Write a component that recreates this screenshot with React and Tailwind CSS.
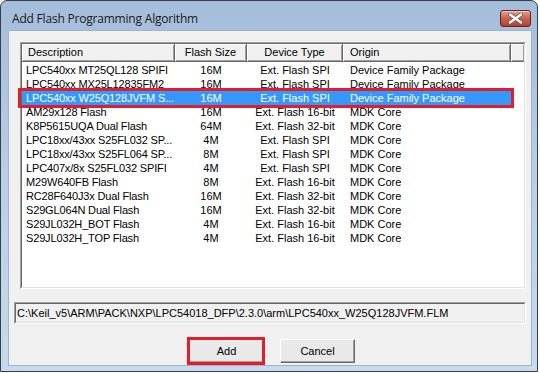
import React from 'react';

const rows = [
    ['LPC540xx MT25QL128 SPIFI', '16M', 'Ext. Flash SPI', 'Device Family Package'],
    ['LPC540xx MX25L12835FM2', '16M', 'Ext. Flash SPI', 'Device Family Package'],
    ['LPC540xx W25Q128JVFM S...', '16M', 'Ext. Flash SPI', 'Device Family Package'],
    ['AM29x128 Flash', '16M', 'Ext. Flash 16-bit', 'MDK Core'],
    ['K8P5615UQA Dual Flash', '64M', 'Ext. Flash 32-bit', 'MDK Core'],
    ['LPC18xx/43xx S25FL032 SP...', '4M', 'Ext. Flash SPI', 'MDK Core'],
    ['LPC18xx/43xx S25FL064 SP...', '8M', 'Ext. Flash SPI', 'MDK Core'],
    ['LPC407x/8x S25FL032 SPIFI', '4M', 'Ext. Flash SPI', 'MDK Core'],
    ['M29W640FB Flash', '8M', 'Ext. Flash 16-bit', 'MDK Core'],
    ['RC28F640J3x Dual Flash', '16M', 'Ext. Flash 32-bit', 'MDK Core'],
    ['S29GL064N Dual Flash', '16M', 'Ext. Flash 32-bit', 'MDK Core'],
    ['S29JL032H_BOT Flash', '4M', 'Ext. Flash 16-bit', 'MDK Core'],
    ['S29JL032H_TOP Flash', '4M', 'Ext. Flash 16-bit', 'MDK Core'],
];

const SELECTED = 2;

// classic 3D header cell
const headCell = "h-full flex items-center bg-[#f0f0f0] border-r border-b border-[#696969] shadow-[inset_1px_1px_0_#ffffff,inset_-1px_-1px_0_#a0a0a0]";

function CloseButton() {
    return (
        <div className="w-[31px] h-[17px] rounded-[3px] border border-[#6b2218] bg-gradient-to-b from-[#e4a394] via-[#c9604c] to-[#b8402c] flex items-center justify-center shadow-[inset_0_1px_0_rgba(255,255,255,0.45)]">
            <svg width="15" height="11" viewBox="0 0 15 11">
                <path d="M2 1.5 L13 9.5 M13 1.5 L2 9.5" stroke="#5a5a5a" strokeWidth="4" strokeLinecap="round" />
                <path d="M2 1.5 L13 9.5 M13 1.5 L2 9.5" stroke="#ffffff" strokeWidth="2.4" strokeLinecap="round" />
            </svg>
        </div>
    );
}

function WinButton({ children }) {
    return (
        <div className="w-[75px] h-[24px] bg-[#e9e9e9] border border-t-white border-l-white border-b-[#696969] border-r-[#696969] shadow-[inset_-1px_-1px_0_#a0a0a0] flex items-center justify-center text-[11px] text-black">
            {children}
        </div>
    );
}

export default function App() {
    return (
        <div className="w-[540px] h-[373px] bg-white font-['Liberation_Sans',Arial,sans-serif]">
            <div className="w-[538px] h-[372px] rounded-t-[7px] border border-[#3a3f46] bg-gradient-to-b from-[#a4bddb] via-[#bacfe7] to-[#c6d9ee] flex flex-col">
                {/* Title bar */}
                <div className="h-[29px] flex items-start justify-between shrink-0">
                    <span className="pl-[11px] pt-[11px] text-[12px] leading-[14px] text-[#1b1b1b] font-['Open_Sans',sans-serif] tracking-[-0.2px]">
                        Add Flash Programming Algorithm
                    </span>
                    <div className="mt-[9px] mr-[6px]">
                        <CloseButton />
                    </div>
                </div>

                {/* Client area */}
                <div className="ml-[7px] mr-[5px] mb-[5px] flex-1 bg-[#f0f0f0] border border-[#9fb3cb] flex flex-col text-[11px] text-black">
                    {/* List view */}
                    <div className="relative mt-[11px] ml-[11px] w-[506px] h-[247px] border border-t-[#a0a0a0] border-l-[#a0a0a0] border-b-white border-r-white">
                        <div className="w-full h-full border border-t-[#696969] border-l-[#696969] border-b-[#e3e3e3] border-r-[#e3e3e3] bg-white flex flex-col overflow-hidden">
                            <div className="h-[18px] flex shrink-0">
                                <div className={headCell + " w-[153px] pl-[6px]"}>Description</div>
                                <div className={headCell + " w-[72px] justify-center"}>Flash Size</div>
                                <div className={headCell + " w-[96px] justify-center"}>Device Type</div>
                                <div className={headCell + " w-[168px] pl-[7px]"}>Origin</div>
                                <div className={headCell + " flex-1 border-r-0"}></div>
                            </div>
                            <div className="pt-[1px] flex flex-col">
                                {rows.map((r, i) => (
                                    <div
                                        key={i}
                                        className={
                                            "h-[14px] w-[489px] flex items-center leading-[14px] whitespace-nowrap " +
                                            (i === SELECTED ? "bg-[#3399ff] text-white" : "text-black")
                                        }
                                    >
                                        <div className="w-[153px] pl-[4px] tracking-[-0.15px]">{r[0]}</div>
                                        <div className="w-[72px] text-center">{r[1]}</div>
                                        <div className="w-[96px] text-center">{r[2]}</div>
                                        <div className="w-[168px] pl-[7px]">{r[3]}</div>
                                    </div>
                                ))}
                            </div>
                        </div>
                        {/* red annotation around selected row */}
                        <div className="absolute left-[-3px] top-[45px] w-[496px] h-[20px] border-[3px] border-[#e41d28] pointer-events-none"></div>
                    </div>

                    {/* Path field */}
                    <div className="mt-[13px] ml-[5px] w-[512px] h-[22px] border border-t-[#a0a0a0] border-l-[#a0a0a0] border-b-white border-r-white">
                        <div className="w-full h-full border border-t-[#696969] border-l-[#696969] border-b-[#e3e3e3] border-r-[#e3e3e3] bg-[#f0f0f0] flex items-center pl-[1px] whitespace-nowrap">
                            C:\Keil_v5\ARM\PACK\NXP\LPC54018_DFP\2.3.0\arm\LPC540xx_W25Q128JVFM.FLM
                        </div>
                    </div>

                    {/* Buttons */}
                    <div className="mt-[15px] ml-[180px] flex gap-[16px]">
                        <div className="relative">
                            <WinButton>Add</WinButton>
                            <div className="absolute left-[-2px] top-[-2px] w-[78px] h-[28px] border-[3px] border-[#e41d28] pointer-events-none"></div>
                        </div>
                        <WinButton>Cancel</WinButton>
                    </div>
                </div>
            </div>
        </div>
    );
}
